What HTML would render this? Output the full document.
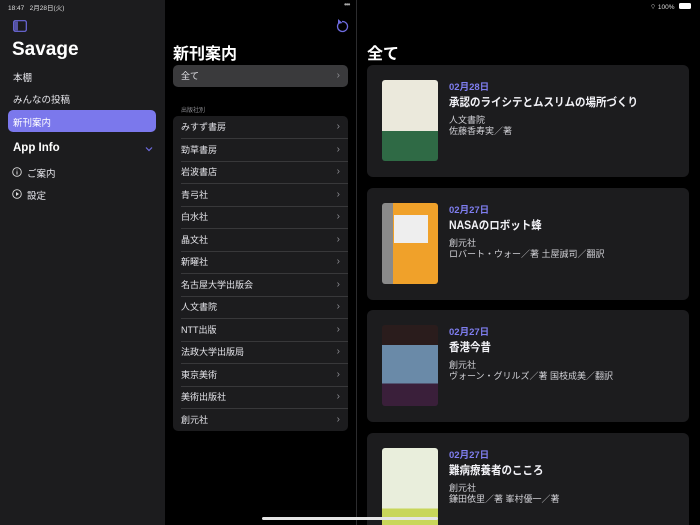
<!DOCTYPE html>
<html><head><meta charset="utf-8"><style>
*{margin:0;padding:0;box-sizing:border-box}
html,body{width:700px;height:525px;overflow:hidden}
body{background:#000;position:relative;font-family:"Liberation Sans","Noto Sans CJK JP",sans-serif;color:#fff}
.abs{position:absolute}
#side{left:0;top:0;width:165px;height:525px;background:#1c1c1e}
.sb{position:absolute;left:13px;font-size:9.5px;color:#e5e5ea}
.row{position:absolute;left:173px;width:175px;height:22.5px;font-size:9px;color:#e5e5ea;padding-left:8px;line-height:22.5px}
.row .ch{position:absolute;right:8px;top:0;color:#8e8e93;font-size:10px}
.row .ln{position:absolute;left:8px;right:0;bottom:0;height:0.5px;background:#38383a}
.card{position:absolute;left:367px;width:322px;height:112px;background:#1c1c1e;border-radius:6px}
.cov{position:absolute;left:15px;top:15px;width:56px;height:81px;border-radius:3px;overflow:hidden}
.date{position:absolute;left:82px;top:14px;font-size:9.5px;font-weight:bold;color:#7f7ef0}
.tt{position:absolute;left:82px;top:29px;font-size:10.5px;font-weight:bold;color:#f2f2f7;transform:scaleY(1.1);transform-origin:left top}
.pb{position:absolute;left:82px;top:48px;font-size:9px;color:#d1d1d6}
.au{position:absolute;left:82px;top:59px;font-size:9px;color:#d1d1d6}
</style></head><body>
<div id="side" class="abs"></div>
<div class="abs" style="left:356px;top:0;width:1px;height:525px;background:#2c2c2e"></div>
<div class="abs" style="left:8px;top:2px;font-size:6.5px;color:#ddd">18:47&nbsp;&nbsp; 2月28日(火)</div>
<div class="abs" style="left:344px;top:0;font-size:8px;color:#aaa;letter-spacing:-1px">•••</div>
<div class="abs" style="left:650px;top:2px;font-size:6.5px;color:#ddd">⌔ 100%</div>
<div class="abs" style="left:679px;top:3px;width:12px;height:6px;background:#fff;border-radius:1.5px"></div>
<svg class="abs" style="left:13px;top:20px" width="14" height="12"><rect x="0.7" y="0.7" width="12.6" height="10.6" rx="1.5" fill="none" stroke="#6e6be0" stroke-width="1.2"/><rect x="1.5" y="1.5" width="3.5" height="9" fill="#6e6be0" opacity=".7"/></svg>
<div class="abs" style="left:12px;top:39px;font-size:19px;font-weight:bold">Savage</div>
<div class="sb" style="top:70px">本棚</div>
<div class="sb" style="top:92px">みんなの投稿</div>
<div class="abs" style="left:8px;top:110px;width:148px;height:22px;background:#7b78ec;border-radius:5px"></div>
<div class="sb" style="top:115px;color:#fff">新刊案内</div>
<div class="abs" style="left:13px;top:142px;font-size:11.5px;font-weight:bold">App Info</div>
<svg class="abs" style="left:145px;top:146px" width="8" height="6"><path d="M1 1.5 L4 4.5 L7 1.5" fill="none" stroke="#6e6be0" stroke-width="1.2"/></svg>
<svg class="abs" style="left:12px;top:167px" width="10" height="10"><circle cx="5" cy="5" r="4.3" fill="none" stroke="#ddd" stroke-width=".9"/><path d="M5 4.3V7.5M5 2.6v.8" stroke="#ddd" stroke-width="1"/></svg>
<div class="sb" style="top:166px;left:27px">ご案内</div>
<svg class="abs" style="left:12px;top:189px" width="10" height="10"><circle cx="5" cy="5" r="4.3" fill="none" stroke="#ddd" stroke-width=".9"/><path d="M4 3v4l3-2z" fill="#ddd"/></svg>
<div class="sb" style="top:188px;left:27px">設定</div>

<svg class="abs" style="left:335px;top:18px" width="14" height="15"><path d="M4.5 4.5 A5 5 0 1 0 7 3.5" fill="none" stroke="#6e6be0" stroke-width="1.3"/><path d="M3 1 L3 6 L7.5 5z" fill="#6e6be0"/></svg>
<div class="abs" style="left:173px;top:40px;font-size:16px;font-weight:bold">新刊案内</div>
<div class="abs" style="left:173px;top:65px;width:175px;height:22px;background:#3a3a3c;border-radius:5px"></div>
<div class="row" style="top:65px;height:22px;line-height:22px">全て<span class="ch">›</span></div>
<div class="abs" style="left:181px;top:105px;font-size:6px;color:#8e8e93">出版社別</div>
<div class="abs" style="left:173px;top:116px;width:175px;height:315px;background:#1c1c1e;border-radius:5px"></div>
<div class="row" style="top:116px">みすず書房<span class="ch">›</span><span class="ln"></span></div>
<div class="row" style="top:138.5px">勁草書房<span class="ch">›</span><span class="ln"></span></div>
<div class="row" style="top:161px">岩波書店<span class="ch">›</span><span class="ln"></span></div>
<div class="row" style="top:183.5px">青弓社<span class="ch">›</span><span class="ln"></span></div>
<div class="row" style="top:206px">白水社<span class="ch">›</span><span class="ln"></span></div>
<div class="row" style="top:228.5px">晶文社<span class="ch">›</span><span class="ln"></span></div>
<div class="row" style="top:251px">新曜社<span class="ch">›</span><span class="ln"></span></div>
<div class="row" style="top:273.5px">名古屋大学出版会<span class="ch">›</span><span class="ln"></span></div>
<div class="row" style="top:296px">人文書院<span class="ch">›</span><span class="ln"></span></div>
<div class="row" style="top:318.5px">NTT出版<span class="ch">›</span><span class="ln"></span></div>
<div class="row" style="top:341px">法政大学出版局<span class="ch">›</span><span class="ln"></span></div>
<div class="row" style="top:363.5px">東京美術<span class="ch">›</span><span class="ln"></span></div>
<div class="row" style="top:386px">美術出版社<span class="ch">›</span><span class="ln"></span></div>
<div class="row" style="top:408.5px">創元社<span class="ch">›</span></div>

<div class="abs" style="left:367px;top:40px;font-size:16px;font-weight:bold">全て</div>
<div class="card" style="top:65px">
 <div class="cov" style="background:linear-gradient(#ebe9dc 0 63%,#2f6a45 63%)"></div>
 <div class="date">02月28日</div><div class="tt">承認のライシテとムスリムの場所づくり</div>
 <div class="pb">人文書院</div><div class="au">佐藤香寿実／著</div></div>
<div class="card" style="top:188px">
 <div class="cov" style="background:linear-gradient(90deg,#8a8a8a 0 20%,#f0a12a 20%)"><div style="position:absolute;left:12px;top:12px;width:34px;height:28px;background:#eee"></div></div>
 <div class="date">02月27日</div><div class="tt">NASAのロボット蜂</div>
 <div class="pb">創元社</div><div class="au">ロバート・ウォー／著 土屋誠司／翻訳</div></div>
<div class="card" style="top:310px">
 <div class="cov" style="background:linear-gradient(#2a1c1c 0 25%,#6a8aa8 25% 72%,#3a1f3a 72%)"></div>
 <div class="date">02月27日</div><div class="tt">香港今昔</div>
 <div class="pb">創元社</div><div class="au">ヴォーン・グリルズ／著 国枝成美／翻訳</div></div>
<div class="card" style="top:433px;height:92px;border-radius:6px 6px 0 0">
 <div class="cov" style="background:linear-gradient(#e9eedc 0 75%,#c8d65a 75%)"></div>
 <div class="date">02月27日</div><div class="tt">難病療養者のこころ</div>
 <div class="pb">創元社</div><div class="au">鎌田依里／著 峯村優一／著</div></div>
<div class="abs" style="left:262px;top:517px;width:176px;height:3px;border-radius:2px;background:#e5e5e5"></div>
</body></html>
